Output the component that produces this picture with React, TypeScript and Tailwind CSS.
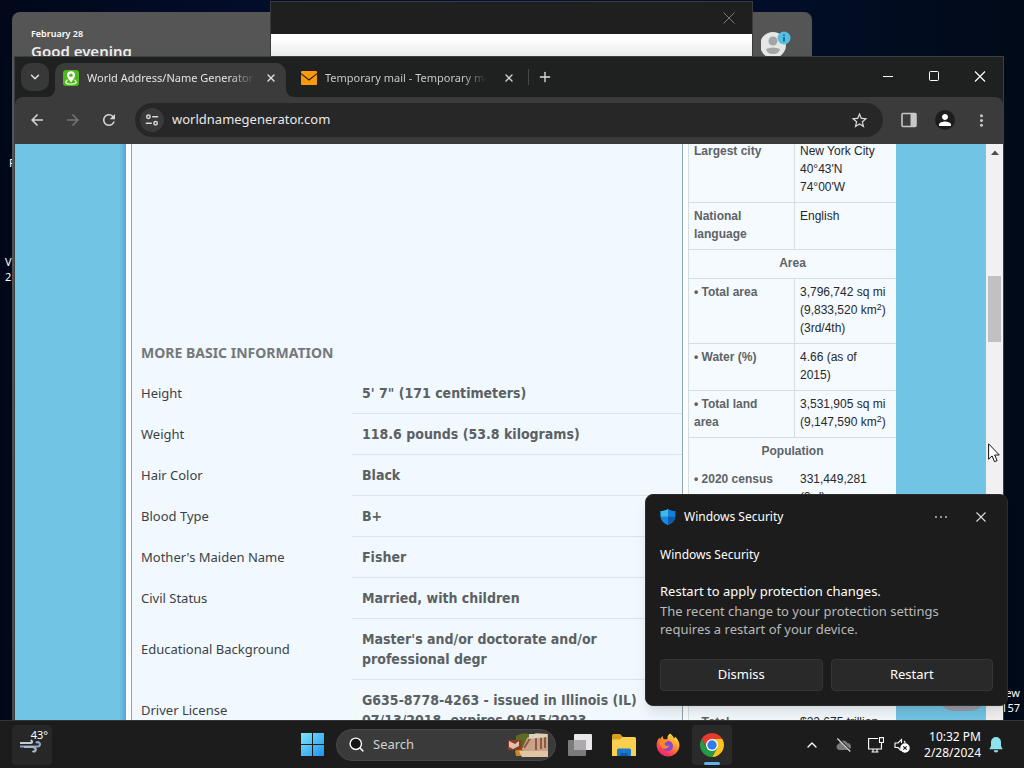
import React from "react";
import { ChevronDown, ChevronUp, X, Plus, Search } from "lucide-react";
import {
  MdArrowBack,
  MdArrowForward,
  MdRefresh,
  MdMoreVert,
  MdStarOutline,
  MdPerson,
} from "react-icons/md";

const ui = "font-['Noto_Sans','Open_Sans',sans-serif]";

const basics: [string, string[]][] = [
  ["Height", ["5' 7\" (171 centimeters)"]],
  ["Weight", ["118.6 pounds (53.8 kilograms)"]],
  ["Hair Color", ["Black"]],
  ["Blood Type", ["B+"]],
  ["Mother's Maiden Name", ["Fisher"]],
  ["Civil Status", ["Married, with children"]],
  ["Educational Background", ["Master's and/or doctorate and/or", "professional degr"]],
  ["Driver License", ["G635-8778-4263 - issued in Illinois (IL)", "07/13/2018, expires 09/15/2023"]],
];

function Lines({ items }: { items: React.ReactNode[] }) {
  return (
    <>
      {items.map((line, i) => (
        <span key={i} className="block whitespace-nowrap">
          {line}
        </span>
      ))}
    </>
  );
}

function Fact({ name, value, plain }: { name: string[]; value: React.ReactNode[]; plain?: boolean }) {
  const edge = plain ? "" : "border-b border-[#d3dee5]";
  return (
    <tr className="align-top">
      <th
        scope="row"
        className={`w-[106px] pt-1 pb-1.5 pl-[5px] text-left font-bold text-[#5d6366] ${edge} ${plain ? "" : "border-r"}`}
      >
        <Lines items={name} />
      </th>
      <td className={`pt-1 pb-1.5 pl-[5px] text-[#25282b] ${edge}`}>
        <Lines items={value} />
      </td>
    </tr>
  );
}

function Section({ title, plain }: { title: string; plain?: boolean }) {
  return (
    <tr>
      <th
        colSpan={2}
        className={`pt-1 pb-1.5 text-center font-bold text-[#5d6366] ${plain ? "" : "border-b border-[#d3dee5]"}`}
      >
        {title}
      </th>
    </tr>
  );
}

function SuperTwo() {
  return <span className="relative -top-1 text-[9px] leading-none">2</span>;
}

function TabStrip() {
  return (
    <div className="flex h-10 shrink-0 items-end bg-[#1f2120] pl-1.5">
      <button
        aria-label="Search tabs"
        className="mb-1.5 grid size-7 place-items-center rounded-[10px] bg-[#383838] text-[#e3e3e3]"
      >
        <ChevronDown size={14} strokeWidth={2.5} />
      </button>
      <div className="relative ml-1.5 flex h-[34px] w-[231px] items-center gap-2 rounded-t-[10px] bg-[#3b3b3b] pr-[7px] pb-1 pl-2">
        <svg className="absolute bottom-0 -left-2 size-2" viewBox="0 0 8 8">
          <path d="M8 0v8H0a8 8 0 0 0 8-8z" fill="#3b3b3b" />
        </svg>
        <svg className="absolute -right-2 bottom-0 size-2" viewBox="0 0 8 8">
          <path d="M0 0v8h8a8 8 0 0 1-8-8z" fill="#3b3b3b" />
        </svg>
        <svg className="size-4 shrink-0" viewBox="0 0 16 16">
          <rect width="16" height="16" rx="3" fill="#4fb81e" />
          <path d="M4.6 9.8C1 12.6 3 14.2 8 14.2s7-1.6 3.4-4.4" fill="none" stroke="#e6f9c9" strokeWidth="1.3" />
          <path d="M8 1.2a4 4 0 0 0-4 4C4 8 8 12.3 8 12.3S12 8 12 5.2a4 4 0 0 0-4-4z" fill="#fff" />
          <circle cx="8" cy="5.2" r="1.7" fill="#4fb81e" />
        </svg>
        <span className="min-w-0 flex-1 overflow-hidden text-[11px] leading-4 whitespace-nowrap text-[#e3e3e3] [mask-image:linear-gradient(to_right,#000_85%,transparent)]">
          World Address/Name Generator
        </span>
        <button aria-label="Close tab" className="grid size-4 place-items-center text-[#e3e3e3]">
          <X size={12} strokeWidth={2.8} />
        </button>
      </div>
      <div className="flex h-[34px] w-[231px] items-center gap-2 pb-1 pl-[15px]">
        <svg className="size-4 shrink-0" viewBox="0 0 16 16">
          <rect y="1" width="16" height="14" rx="1" fill="#f99a0c" />
          <path d="M0 3.6 8 10l8-6.400" fill="none" stroke="#2b1c05" strokeWidth="1.1" />
        </svg>
        <span className="min-w-0 flex-1 overflow-hidden text-[11px] leading-4 whitespace-nowrap text-[#c7c7c7] [mask-image:linear-gradient(to_right,#000_85%,transparent)]">
          Temporary mail - Temporary mail
        </span>
        <button aria-label="Close tab" className="ml-1.5 grid size-4 place-items-center text-[#d0d0d0]">
          <X size={12} strokeWidth={2.8} />
        </button>
      </div>
      <span className="mb-3 ml-[11px] h-4 w-px bg-[#474747]" />
      <button aria-label="New tab" className="mb-2.5 ml-1.5 grid size-5 place-items-center text-[#dcdcdc]">
        <Plus size={16} strokeWidth={2} />
      </button>
      <div className="ml-auto flex h-10 text-white">
        <button aria-label="Minimize" className="grid w-[46px] place-items-center">
          <svg width="12" height="12" viewBox="0 0 12 12">
            <path d="M1 5.5h10" stroke="currentColor" />
          </svg>
        </button>
        <button aria-label="Maximize" className="grid w-[46px] place-items-center">
          <svg width="12" height="12" viewBox="0 0 12 12">
            <rect x="1.5" y=".5" width="9" height="9" rx="1" fill="none" stroke="currentColor" />
          </svg>
        </button>
        <button aria-label="Close" className="grid w-[46px] place-items-center">
          <svg width="12" height="12" viewBox="0 0 12 12">
            <path d="m1 .5 10 10M11 .5l-10 10" stroke="currentColor" strokeWidth="1.1" />
          </svg>
        </button>
      </div>
    </div>
  );
}

function Toolbar() {
  return (
    <div className="shrink-0 bg-[#1f2120]">
      <div className="flex h-[47px] items-center rounded-t-lg bg-[#3b3b3b] px-1 pb-px">
        <button aria-label="Back" className="grid size-9 place-items-center text-[#d6d6d6]">
          <MdArrowBack size={18} />
        </button>
        <button aria-label="Forward" className="grid size-9 place-items-center text-[#757575]">
          <MdArrowForward size={18} />
        </button>
        <button aria-label="Reload" className="grid size-9 place-items-center text-[#d6d6d6]">
          <MdRefresh size={18} />
        </button>
        <label className="mx-2 flex h-[34px] flex-1 items-center gap-2 rounded-full bg-[#272727] pr-3.5 pl-[5px]">
          <span className="grid size-6 place-items-center rounded-full bg-[#3a3a3a]">
            <svg width="14" height="14" viewBox="0 0 14 14" fill="none" stroke="#d8d8d8" strokeWidth="1.5">
              <circle cx="3.4" cy="3.8" r="1.7" />
              <path d="M7.2 3.8h6M.8 10.2h6" />
              <circle cx="10.6" cy="10.2" r="1.7" />
            </svg>
          </span>
          <input
            aria-label="Address"
            defaultValue="worldnamegenerator.com"
            className="min-w-0 flex-1 bg-transparent text-[13px] text-[#e8e8e8] outline-none"
          />
          <button aria-label="Bookmark this page" className="text-[#d6d6d6]">
            <MdStarOutline size={19} />
          </button>
        </label>
        <button aria-label="Side panel" className="grid size-9 place-items-center">
          <svg width="16" height="16" viewBox="0 0 16 16">
            <rect x="1" y="1.5" width="14" height="13" rx="1" fill="none" stroke="#c6c6c6" strokeWidth="1.6" />
            <path d="M9.5 1.5H15v13H9.5z" fill="#c6c6c6" />
          </svg>
        </button>
        <button aria-label="Profile" className="mx-2 grid size-5 place-items-center rounded-full bg-[#1d1d1d] text-white">
          <MdPerson size={18} />
        </button>
        <button aria-label="Menu" className="grid size-9 place-items-center text-[#c6c6c6]">
          <MdMoreVert size={19} />
        </button>
      </div>
    </div>
  );
}

function Page() {
  return (
    <div className="flex min-h-0 flex-1 overflow-hidden bg-[#72c4e4]">
      <div className="w-[111px] shrink-0 bg-linear-to-r from-[#72c4e4] from-94% to-[#55a7d2]" />
      <main className="flex min-w-0 flex-1 bg-[#fbfdff]">
        <section className="ml-[5px] min-w-0 flex-1 border-x border-[#8fa6ac] bg-[#f2f9fe] pt-[199px] font-['Noto_Sans',sans-serif] text-[13px] leading-5">
          <h2 className="pb-2.5 pl-[9px] text-sm leading-5 font-bold text-[#74787b]">MORE BASIC INFORMATION</h2>
          <table className="w-full border-separate border-spacing-0">
            <tbody>
              {basics.map(([label, value]) => (
                <tr key={label}>
                  <th scope="row" className="w-[220px] pt-[9px] pb-[11px] pl-[9px] text-left font-normal text-[#3b4146]">
                    {label}
                  </th>
                  <td className="border-b border-[#dbe4ec] py-2.5 pl-2.5 font-['DejaVu_Sans_Condensed','DejaVu_Sans',sans-serif] text-sm leading-5 font-bold text-[#5b6063]">
                    <Lines items={value} />
                  </td>
                </tr>
              ))}
            </tbody>
          </table>
        </section>
        <aside className="ml-[5px] w-[208px] shrink-0 border-l border-[#d3dee5] bg-[#f5faff]">
          <table className="-mt-1.5 w-full border-separate border-spacing-0 font-['Liberation_Sans',Arial,sans-serif] text-xs leading-[18px]">
            <tbody>
              <Fact name={["Largest city"]} value={["New York City", "40°43'N", "74°00'W"]} />
              <Fact name={["National", "language"]} value={["English"]} />
              <Section title="Area" />
              <Fact
                name={["• Total area"]}
                value={["3,796,742 sq mi", <>(9,833,520 km<SuperTwo />)</>, "(3rd/4th)"]}
              />
              <Fact name={["• Water (%)"]} value={["4.66 (as of", "2015)"]} />
              <Fact
                name={["• Total land", "area"]}
                value={["3,531,905 sq mi", <>(9,147,590 km<SuperTwo />)</>]}
              />
              <Section title="Population" plain />
              <Fact plain name={["• 2020 census"]} value={["331,449,281", "(3rd)"]} />
              <tr>
                <td colSpan={2} className="h-[197px]" />
              </tr>
              <Fact plain name={["• Total"]} value={["$22.675 trillion"]} />
            </tbody>
          </table>
        </aside>
      </main>
      <div className="flex w-[90px] shrink-0 items-end justify-end pb-[9px]">
        <span className="h-8 w-12 rounded-full bg-[#9a9da6]" />
      </div>
      <div className="flex w-[17px] shrink-0 flex-col items-center bg-[#f1f1f1]">
        <svg className="mt-1.5 h-[5px] w-2" viewBox="0 0 8 5">
          <path d="M0 5 4 .5 8 5z" fill="#4d4d4d" />
        </svg>
        <div className="mt-[121px] h-[66px] w-[13px] bg-[#c1c1c1]" />
      </div>
    </div>
  );
}

function Notification() {
  return (
    <section
      aria-label="Windows Security"
      className="absolute right-4 bottom-3.5 w-[363px] rounded-lg border border-[#2c2c2c] bg-[#1c1c1c] px-3.5 pb-3.5 text-white shadow-lg"
    >
      <header className="flex h-[43px] items-center gap-2">
        <svg className="size-4" viewBox="0 0 16 16">
          <path d="M8 0c2.3 1.6 4.7 2 7.4 2.1V7c0 4.300-2.900 7.200-7.400 9C3.500 14.200.6 11.300.6 7V2.100C3.300 2 5.700 1.600 8 0z" fill="#1580d8" />
          <path d="M8 0v7.800H.7C.6 7.500.6 7.300.6 7V2.100C3.300 2 5.700 1.600 8 0z" fill="#3cb8f0" />
          <path d="M8 7.800V16C3.900 14.300 1.200 11.700.7 7.800z" fill="#1a86dd" />
          <path d="M8 7.800h7.300C14.800 11.700 12.100 14.300 8 16z" fill="#0c5cab" />
        </svg>
        <h2 className="flex-1 text-xs">Windows Security</h2>
        <button aria-label="More options" className="grid size-6 place-items-center">
          <svg width="12" height="2" viewBox="0 0 12 2" fill="#cfcfcf">
            <circle cx="1" cy="1" r=".9" />
            <circle cx="6" cy="1" r=".9" />
            <circle cx="11" cy="1" r=".9" />
          </svg>
        </button>
        <button aria-label="Dismiss notification" className="ml-2 grid size-6 place-items-center text-[#dedede]">
          <svg width="10" height="10" viewBox="0 0 10 10">
            <path d="m.5.5 9 9m0-9-9 9" stroke="currentColor" strokeWidth="1.1" />
          </svg>
        </button>
      </header>
      <p className="pt-[7px] text-xs leading-5">Windows Security</p>
      <p className="pt-4 pb-px text-[13px] leading-5">Restart to apply protection changes.</p>
      <p className="pr-5 text-[13px] leading-[18px] text-[#b9b9b9]">
        The recent change to your protection settings requires a restart of your device.
      </p>
      <div className="mt-[21px] grid grid-cols-2 gap-2 text-[13px]">
        <button className="h-8 rounded border border-[#353535] bg-[#292929]">Dismiss</button>
        <button className="h-8 rounded border border-[#353535] bg-[#292929]">Restart</button>
      </div>
    </section>
  );
}

function TaskButton({ label, active, children }: { label: string; active?: boolean; children: React.ReactNode }) {
  return (
    <button
      aria-label={label}
      className={`relative grid size-10 place-items-center rounded ${active ? "bg-[#2a2a2a]" : ""}`}
    >
      {children}
      {active && <span className="absolute bottom-0 left-3 h-[3px] w-4 rounded-full bg-[#5fb4ea]" />}
    </button>
  );
}

function Taskbar() {
  return (
    <footer className="grid h-12 shrink-0 grid-cols-[1fr_auto_1fr] items-center border-t border-[#323436] bg-[#1c1c1c] text-white">
      <button
        aria-label="Weather"
        className="relative ml-3 size-10 rounded bg-[#272727] text-left"
      >
        <svg className="absolute top-3.5 left-2 h-3.5 w-6" viewBox="0 0 24 14" fill="none" strokeWidth="2.200">
          <path d="M0 4h11q2-.5 0-3" stroke="#c2ccd8" />
          <path d="M0 7.500h18a2.200 2.200 0 1 0-2-3.500" stroke="#8fa6bd" />
          <path d="M4 8h9q3.500 1 2.500 3.500-1.500 1.800-3 .5" stroke="#a9b8c8" />
        </svg>
        <span className="absolute top-0.5 right-1 text-[11px] leading-4">43°</span>
      </button>

      <div className="flex items-center gap-1">
        <TaskButton label="Start">
          <svg width="23" height="23" viewBox="0 0 23 23">
            <defs>
              <linearGradient id="start" x1="0" y1="0" x2="1" y2="1">
                <stop offset="0" stopColor="#7fe6fb" />
                <stop offset="1" stopColor="#1d93ec" />
              </linearGradient>
            </defs>
            <path d="M0 0h11v11H0zM12 0h11v11H12zM0 12h11v11H0zM12 12h11v11H12z" fill="url(#start)" />
          </svg>
        </TaskButton>
        <label className="flex h-8 w-[220px] items-center rounded-full border border-[#474747] bg-[#3a3a3a] pr-1.5 pl-[11px]">
          <Search size={17} strokeWidth={2} className="shrink-0 fill-[#161616]" />
          <input
            aria-label="Search"
            placeholder="Search"
            className="ml-2 min-w-0 flex-1 bg-transparent text-[13px] text-white outline-none placeholder:text-[#d2d2d2]"
          />
          <svg className="h-[26px] w-[42px] shrink-0" viewBox="0 0 42 26">
            <path d="M9 4q8-5 15-1l-3 13-12 6z" fill="#5c6b1f" />
            <path d="M8 19q6-5 14-1l-2 6H9z" fill="#c98a2a" />
            <path d="M1 8h14v10H1z" fill="#8d3b2c" />
            <path d="M2 9l6 3 4-3v5l-6 3-4-2z" fill="#d9c4a8" />
            <path d="m15 17 5-11 9-5 12 1v17H17z" fill="#c9a287" />
            <path d="m24 5-7 11M29 5v13M34 4v13M38 4v12" stroke="#8a5a45" strokeWidth="2" />
            <path d="M12 19h29v6H15z" fill="#e2c6a3" />
            <path d="M22 2h18v3l-18 2z" fill="#dcd1bd" />
          </svg>
        </label>
        <TaskButton label="Task view">
          <svg width="24" height="22" viewBox="0 0 24 22">
            <rect x="6" width="18" height="16" rx="1" fill="#e9e7e9" />
            <rect y="6" width="18" height="16" rx="1" fill="#7b7b7b" />
            <path d="M6 6h12v10H6z" fill="#ababab" />
          </svg>
        </TaskButton>
        <TaskButton label="File Explorer">
          <svg width="24" height="22" viewBox="0 0 24 22">
            <path d="M0 1.500Q0 0 1.500 0H8l2.500 2.500V7H0z" fill="#d9a01f" />
            <path d="M0 5.500h8L10.500 3H22.500Q24 3 24 4.500V22H0z" fill="#fcd04f" />
            <path d="M5 22v-6q0-1.500 1.500-1.500h11q1.500 0 1.500 1.500v6z" fill="#1a78cf" />
            <path d="M8 22v-3h8v3z" fill="#125ca6" />
          </svg>
        </TaskButton>
        <TaskButton label="Firefox">
          <svg width="24" height="24" viewBox="0 0 24 24">
            <defs>
              <linearGradient id="fox" x1=".85" y1="0" x2=".2" y2="1">
                <stop offset="0" stopColor="#fff04e" />
                <stop offset=".4" stopColor="#ff9a2c" />
                <stop offset=".75" stopColor="#ff4050" />
                <stop offset="1" stopColor="#e0208c" />
              </linearGradient>
              <radialGradient id="globe">
                <stop offset="0" stopColor="#7a54e0" />
                <stop offset="1" stopColor="#9340c8" />
              </radialGradient>
            </defs>
            <path
              d="M14 .5c2.500 1.500 3.600 3.500 3.900 5 .7-.3 1-1 1-1.900 3 2.400 4.600 6 4.600 9.400A11.500 11.500 0 0 1 .6 13C.5 9.500 1.500 6.500 3.500 4.500l.4 2.200C4.500 5 5.600 3.700 6.800 3c-.1 1.400.2 2.500 1.200 3.300h3.500C11 4 12 1.800 14 .5z"
              fill="url(#fox)"
            />
            <circle cx="11.800" cy="13" r="5.200" fill="url(#globe)" />
            <path d="M4 9c2-2 4.500-2 7.500-1.600.1 1.500-2.700 1.900-3 3.300-.2 1.700 2 3 4.600 1.700-.4 2.600-3.500 4-6.400 2.800C4.500 14.200 3.600 11.500 4 9z" fill="#ff8a24" />
          </svg>
        </TaskButton>
        <TaskButton label="Google Chrome" active>
          <svg width="24" height="24" viewBox="0 0 24 24">
            <path d="M12 6h10.390A12 12 0 0 1 12 24l5.200-9z" fill="#fcc31e" />
            <path d="M6.800 15 1.610 6A12 12 0 0 1 22.390 6H12z" fill="#e63b2e" />
            <path d="M6.800 15 1.610 6A12 12 0 0 0 12 24l5.200-9z" fill="#229a48" />
            <circle cx="12" cy="12" r="6" fill="#fff" />
            <circle cx="12" cy="12" r="4.700" fill="#2f7de9" />
          </svg>
        </TaskButton>
      </div>

      <div className="flex items-center justify-end pr-[21px]">
        <button aria-label="Show hidden icons" className="mr-4">
          <ChevronUp size={16} />
        </button>
        <svg className="mr-4 size-4" viewBox="0 0 16 16">
          <path d="M3.500 13A3.200 3.200 0 0 1 3 6.700 4.600 4.600 0 0 1 11.500 6 3.600 3.600 0 0 1 12.500 13z" fill="#7b7b7b" />
          <path d="m2 1.500 13 13" stroke="#1c1c1c" strokeWidth="2.200" />
          <path d="m1.300 1.500 13 13" stroke="#d8d8d8" strokeWidth="1.200" />
        </svg>
        <svg className="mr-2.5 size-4" viewBox="0 0 16 16" fill="none" stroke="#fff" strokeWidth="1.100">
          <path d="M10 1.500H.6v10.500h12.800V8M3.500 15h7M5 12v3M9 12v3" />
          <path d="M11.500.6h4v4.900h-4zM13.500 5.500V10" />
        </svg>
        <svg className="mr-3.5 size-4" viewBox="0 0 16 16" fill="none" stroke="#fff" strokeWidth="1.100">
          <path d="M7 13.500 4 10.500H1V6h3l3.500-3.500V6M10 4q1 .8 1.200 2" />
          <circle cx="11" cy="11" r="4.200" fill="#fff" />
          <path d="m9.300 9.300 3.400 3.400m0-3.400-3.400 3.400" stroke="#1c1c1c" />
        </svg>
        <time className="text-right text-xs leading-4">
          10:32 PM
          <br />
          2/28/2024
        </time>
        <svg className="ml-2 h-4 w-3.5" viewBox="0 0 14 16">
          <path d="M7 0a5 5 0 0 0-5 5v4L.3 12.200h13.400L12 9V5a5 5 0 0 0-5-5z" fill="#8fe3ee" />
          <path d="M4.800 13.300h4.400a2.200 2.200 0 0 1-4.400 0z" fill="#8fe3ee" />
        </svg>
      </div>
    </footer>
  );
}

export default function App() {
  return (
    <div className={`flex h-screen flex-col overflow-hidden bg-[#020b1c] ${ui}`}>
      <div className="relative min-h-0 flex-1 overflow-hidden bg-linear-to-r from-[#01081a] via-[#04123a] to-[#010a18]">
        <span className="absolute top-[155px] left-[9px] text-[11px] leading-4 text-white">F</span>
        <span className="absolute top-[254px] left-[5px] text-[11px] leading-[15px] text-white">
          V<br />2
        </span>
        <span className="absolute right-1 bottom-[5px] text-right text-[11px] leading-[15px] text-white">
          ew
          <br />
          157
        </span>

        <section className="absolute top-3 bottom-0 left-3 flex w-[800px] justify-between rounded-t-lg bg-[#525252] bg-linear-to-b from-[#555555] to-[#4a4a4a] px-[19px] pt-[15px] text-white">
          <div>
            <p className="text-[9px] leading-[14px] font-semibold">February 28</p>
            <p className="text-[15px] leading-5 font-semibold text-[#ececec]">Good evening</p>
          </div>
          <svg className="mt-1 mr-0.5 h-[26px] w-[30px]" viewBox="0 0 30 26">
            <circle cx="12" cy="14" r="13" fill="#e6e6e6" />
            <circle cx="12" cy="10" r="4.500" fill="#a4a4a4" />
            <path d="M5 18q7-3 14 0-1 5-7 5t-7-5z" fill="#a4a4a4" />
            <circle cx="23" cy="7" r="6.500" fill="#55bfe3" />
            <path d="M23 3.500v1.500M23 6v4.500" stroke="#1c5f80" strokeWidth="1.600" />
          </svg>
        </section>

        <section className="absolute top-px left-[270px] h-24 w-[483px] border border-[#3a3a3f] bg-linear-to-b from-white from-40% to-[#d0d0d0] to-80%">
          <div className="flex h-8 items-center justify-end bg-[#1f1f1f] pr-[17px]">
            <button aria-label="Close" className="grid size-3 place-items-center text-[#7a7a7a]">
              <svg width="12" height="12" viewBox="0 0 12 12">
                <path d="m.5.5 11 11m0-11-11 11" stroke="currentColor" />
              </svg>
            </button>
          </div>
        </section>

        <section className="absolute top-14 right-5 bottom-0 left-3.5 flex flex-col border border-b-0 border-[#3c3f41] bg-[#1f2120]">
          <TabStrip />
          <Toolbar />
          <Page />
        </section>

        <Notification />

        <svg className="absolute top-[443px] right-6 h-5 w-3" viewBox="0 0 12 20">
          <path d="M.6.8v15.400l3.500-3.300 2.400 5.800 2.600-1.100-2.400-5.600h4.600z" fill="#fff" stroke="#111" strokeWidth="1" />
        </svg>
      </div>
      <Taskbar />
    </div>
  );
}
